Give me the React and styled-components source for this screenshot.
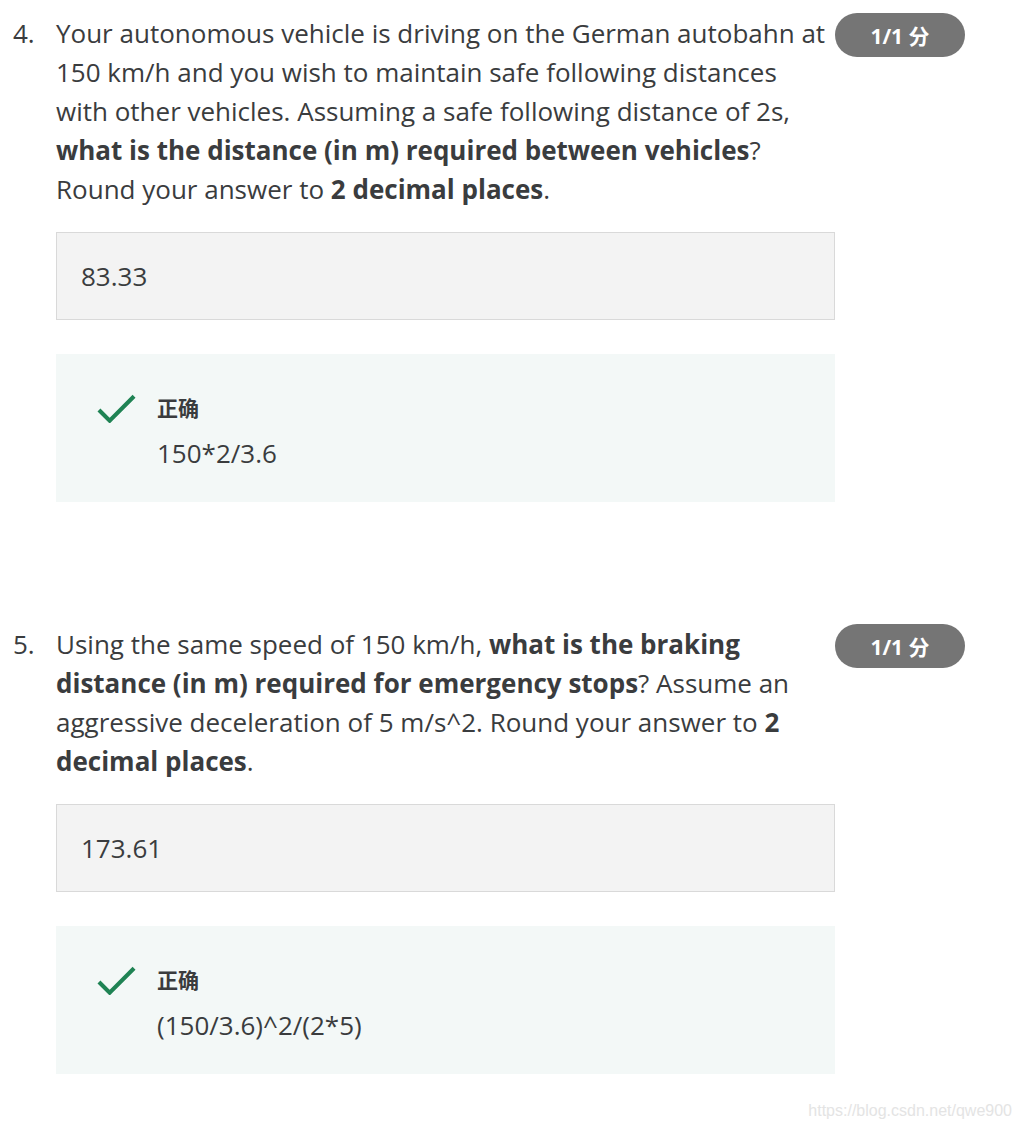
import styled, { createGlobalStyle } from "styled-components";

const GlobalStyle = createGlobalStyle`
  body {
    margin: 0;
    background: #ffffff;
    font-family: "Open Sans", "Noto Sans CJK SC", sans-serif;
    color: #3a3c3e;
  }
`;

const questions = [
  {
    num: "4.",
    text: (
      <>
        Your autonomous vehicle is driving on the German autobahn at 150 km/h and you wish to maintain safe
        following distances with other vehicles. Assuming a safe following distance of 2s,{" "}
        <b>what is the distance (in m) required between vehicles</b>? Round your answer to{" "}
        <b>2 decimal places</b>.
      </>
    ),
    answer: "83.33",
    explain: "150*2/3.6",
  },
  {
    num: "5.",
    text: (
      <>
        Using the same speed of 150 km/h, <b>what is the braking distance (in m) required for emergency stops</b>?
        Assume an aggressive deceleration of 5 m/s^2. Round your answer to <b>2 decimal places</b>.
      </>
    ),
    answer: "173.61",
    explain: "(150/3.6)^2/(2*5)",
  },
];

export default function App() {
  return (
    <Page>
      <GlobalStyle />
      {questions.map((q, i) => (
        <Question key={q.num} $first={i === 0}>
          <Number>{q.num}</Number>
          <Body>
            <Prompt>{q.text}</Prompt>
            <AnswerBox>{q.answer}</AnswerBox>
            <Feedback>
              <Check viewBox="0 0 40 30">
                <path d="M2 17 L13 28 L38 3" fill="none" stroke="#1f8354" strokeWidth="4.2" />
              </Check>
              <FeedbackText>
                <Verdict>正确</Verdict>
                <Explain>{q.explain}</Explain>
              </FeedbackText>
            </Feedback>
          </Body>
          <Badge>1/1 分</Badge>
        </Question>
      ))}
      <Watermark>https://blog.csdn.net/qwe900</Watermark>
    </Page>
  );
}

const Page = styled.div`
  width: 1021px;
  height: 1129px;
  box-sizing: border-box;
  padding-top: 14px;
  display: flex;
  flex-direction: column;
`;

const Question = styled.div`
  display: grid;
  grid-template-columns: 56px 779px 130px;
  align-items: start;
  margin-top: ${(p) => (p.$first ? "0" : "123px")};
`;

const Number = styled.div`
  font-size: 26px;
  line-height: 39px;
  padding-left: 13px;
`;

const Body = styled.div`
  display: flex;
  flex-direction: column;
`;

const Prompt = styled.div`
  font-size: 26px;
  line-height: 39px;
  padding-right: 4px;
  b {
    font-weight: 700;
  }
`;

const AnswerBox = styled.div`
  margin-top: 23px;
  height: 88px;
  box-sizing: border-box;
  background: #f3f3f3;
  border: 1px solid #d9d9d9;
  padding-left: 24px;
  display: flex;
  align-items: center;
  font-size: 26px;
`;

const Feedback = styled.div`
  margin-top: 34px;
  height: 148px;
  box-sizing: border-box;
  background: #f3f8f7;
  padding: 39px 0 0 41px;
  display: flex;
  gap: 21px;
  align-items: flex-start;
`;

const Check = styled.svg`
  width: 39px;
  height: 30px;
  flex-shrink: 0;
`;

const FeedbackText = styled.div`
  display: flex;
  flex-direction: column;
`;

const Verdict = styled.div`
  font-size: 21px;
  line-height: 30px;
  font-weight: 700;
`;

const Explain = styled.div`
  margin-top: 12px;
  font-size: 26px;
  line-height: 36px;
`;

const Badge = styled.div`
  width: 130px;
  height: 44px;
  margin-top: -1px;
  border-radius: 22px;
  background: #757575;
  color: #ffffff;
  font-weight: 700;
  font-size: 21px;
  display: flex;
  align-items: center;
  justify-content: center;
`;

const Watermark = styled.div`
  margin-top: auto;
  padding: 0 9px 9px 0;
  align-self: flex-end;
  font-family: "Liberation Sans", Arial, sans-serif;
  font-size: 16px;
  color: #e4e4e4;
`;
